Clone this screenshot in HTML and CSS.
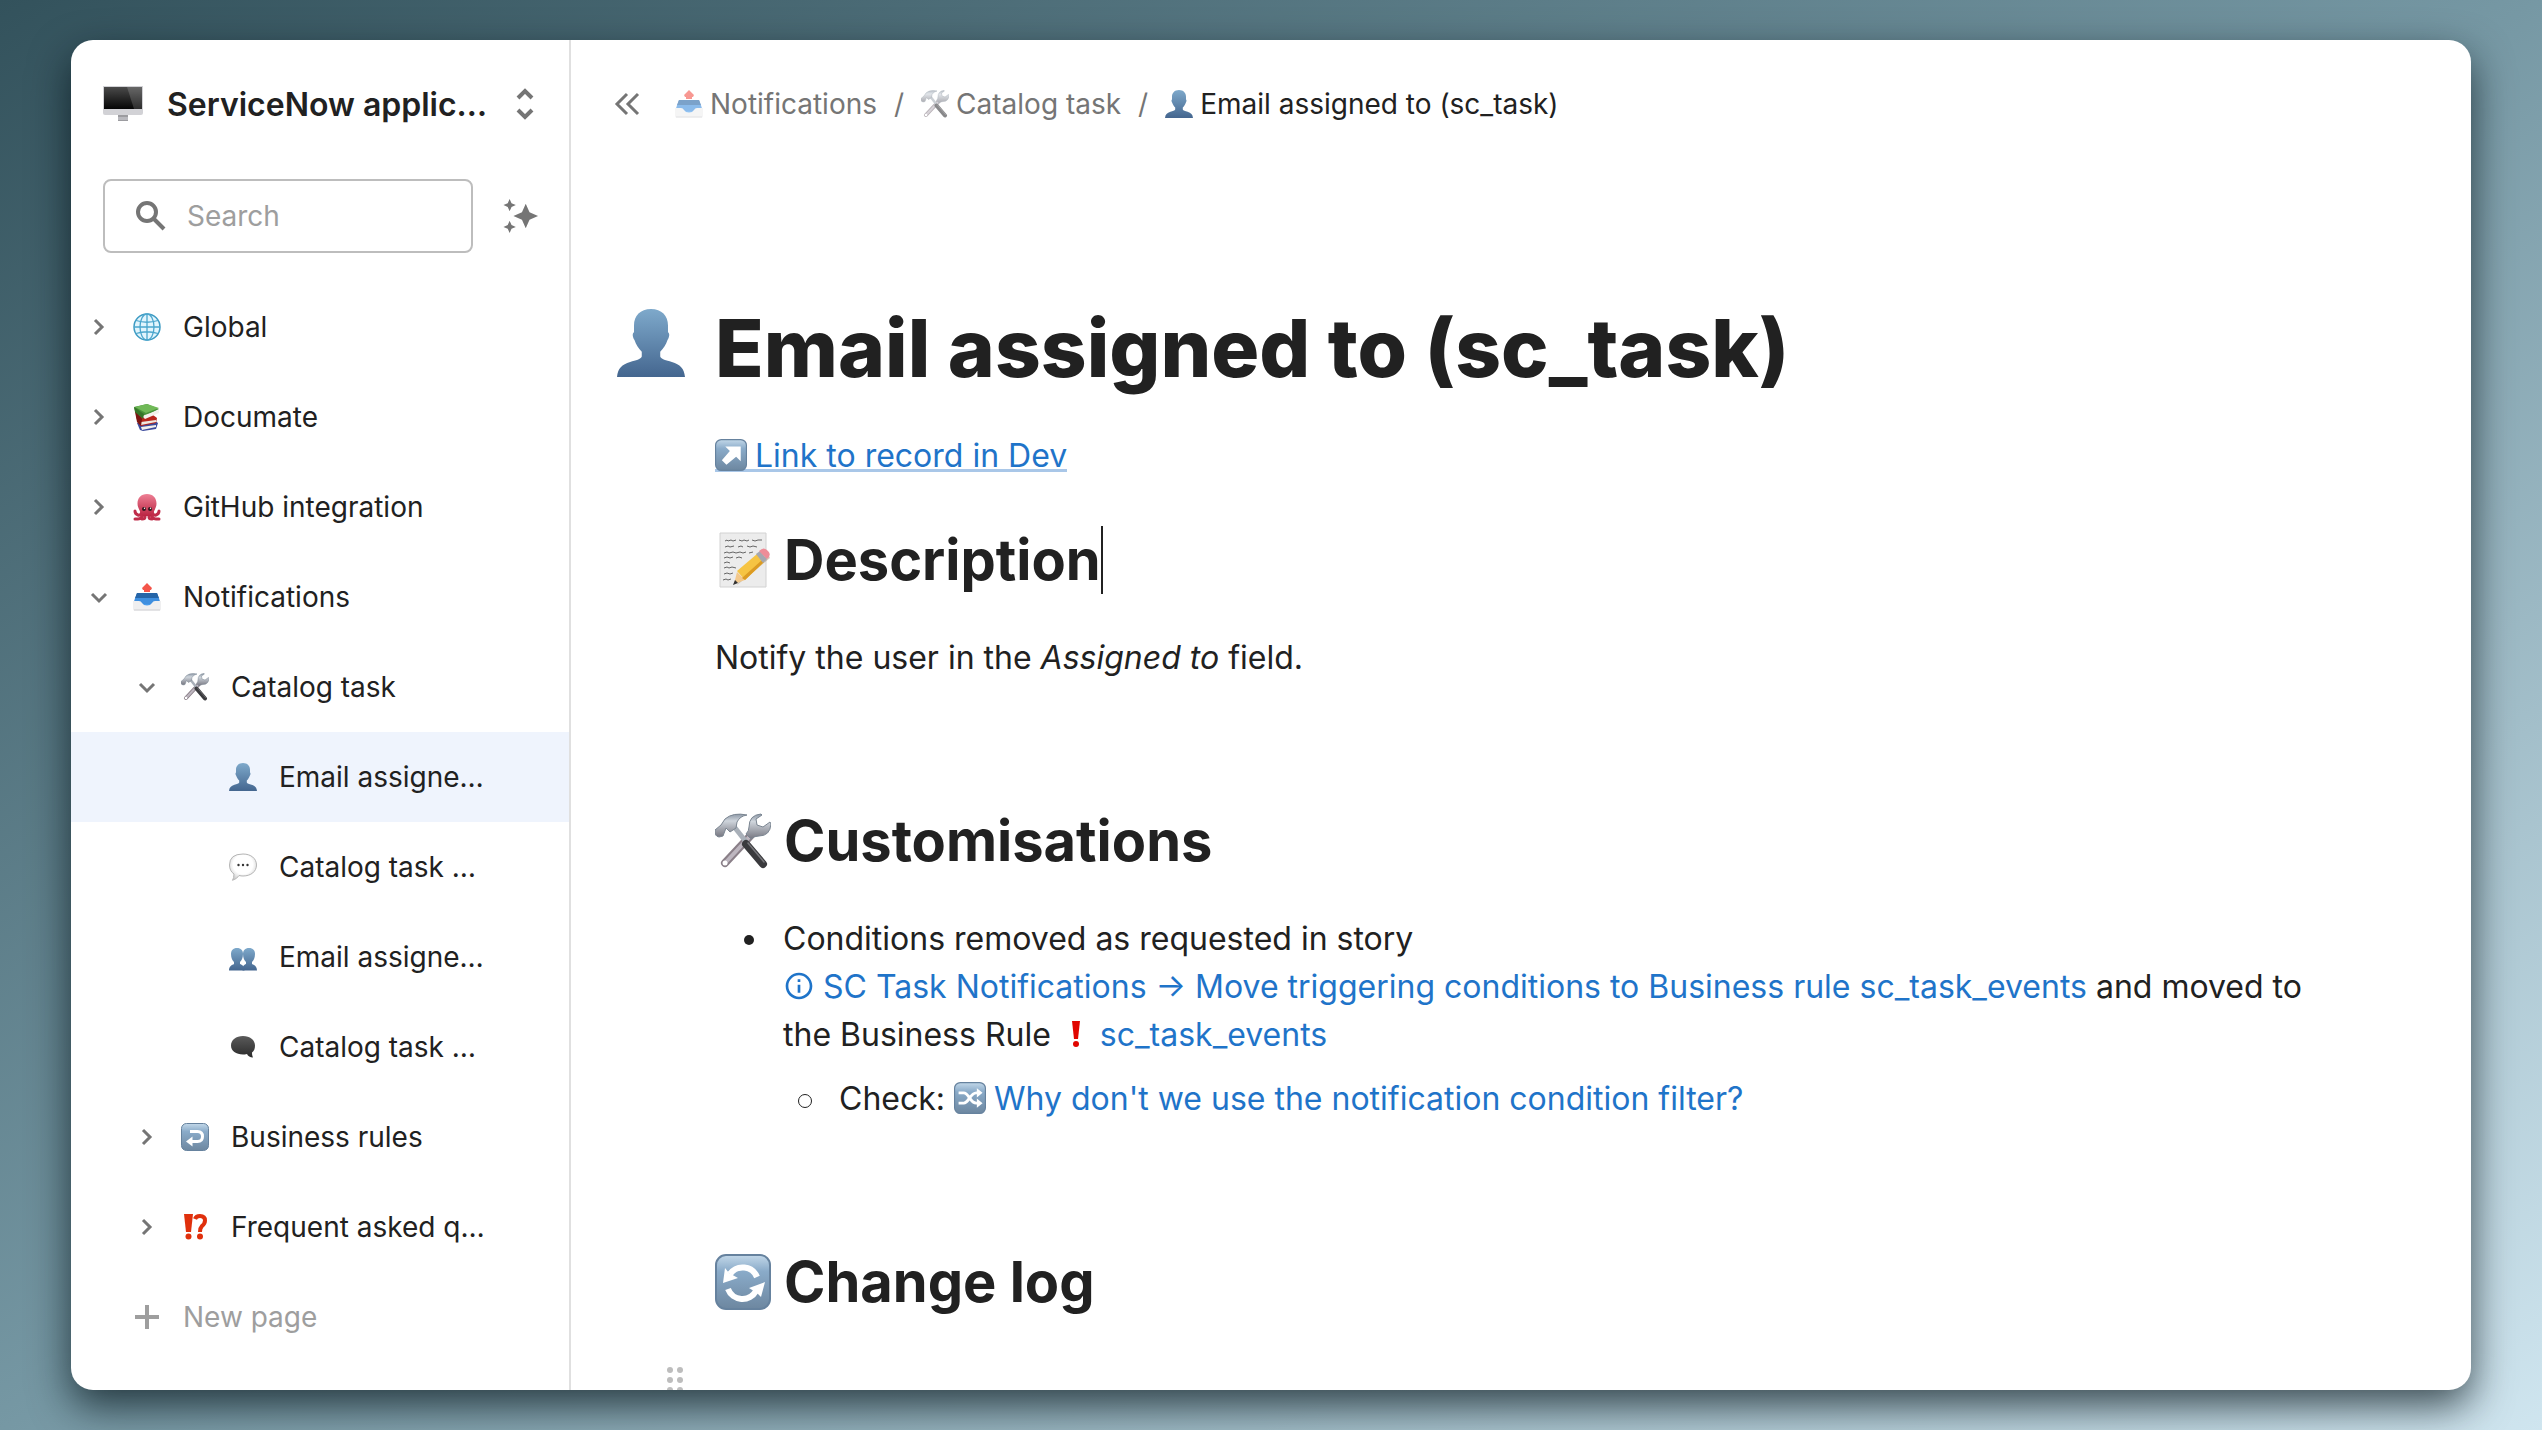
FILE: index.html
```html
<!DOCTYPE html>
<html lang="en">
  <head>
    <meta charset="UTF-8" />
    <meta name="viewport" content="width=device-width, initial-scale=1.0" />
    <title>Email assigned to (sc_task)</title>
    <link rel="stylesheet" href="styles.css" />
  </head>
  <body>
    <!-- icon sprite -->
    <svg class="sprite" aria-hidden="true">
      <defs>
        <linearGradient id="g-person" x1="0" y1="0" x2="0" y2="1">
          <stop offset="0" stop-color="#7ea9cb" />
          <stop offset="1" stop-color="#44668f" />
        </linearGradient>
        <linearGradient id="g-tile" x1="0" y1="0" x2="0" y2="1">
          <stop offset="0" stop-color="#c3d8e9" />
          <stop offset="0.3" stop-color="#8aabc9" />
          <stop offset="1" stop-color="#6d87a0" />
        </linearGradient>
        <linearGradient id="g-steel" x1="0" y1="0" x2="0" y2="1">
          <stop offset="0" stop-color="#8d98a6" />
          <stop offset="0.3" stop-color="#cfd5dc" />
          <stop offset="1" stop-color="#767680" />
        </linearGradient>
        <linearGradient id="g-screen" x1="0" y1="0" x2="0" y2="1">
          <stop offset="0" stop-color="#4a4a4a" />
          <stop offset="1" stop-color="#050505" />
        </linearGradient>
        <linearGradient id="g-tray" x1="0" y1="0" x2="0" y2="1">
          <stop offset="0" stop-color="#2a6cb4" />
          <stop offset="1" stop-color="#4ba1f3" />
        </linearGradient>
        <linearGradient id="g-dark" x1="0" y1="0" x2="0" y2="1">
          <stop offset="0" stop-color="#5a5a5a" />
          <stop offset="1" stop-color="#2b2b2b" />
        </linearGradient>
        <linearGradient id="g-octo" x1="0" y1="0" x2="0" y2="1">
          <stop offset="0" stop-color="#ee8095" />
          <stop offset="1" stop-color="#bb2442" />
        </linearGradient>
        <radialGradient id="g-bubble" cx="0.5" cy="0.4" r="0.6">
          <stop offset="0.6" stop-color="#ffffff" />
          <stop offset="1" stop-color="#cfcfcf" />
        </radialGradient>
      </defs>

      <symbol id="monitor" viewBox="0 0 40 40">
        <path fill="#b9b9be" d="M15 31h10v5H15z" />
        <path fill="#d2d2d6" d="M0 2h40v27q0 2-2 2H2q-2 0-2-2z" />
        <path fill="#9c9ca0" d="M15 31h10v2H15zM15 36h10v1H15z" />
        <path fill="url(#g-screen)" d="M1 3h38v22H1z" />
        <path fill="#fff" opacity="0.16" d="M24 3h15v22h-8z" />
      </symbol>
      <symbol id="globe" viewBox="0 0 28 28">
        <circle cx="14" cy="14" r="13" fill="#e2f5fd" stroke="#3f9cc4" stroke-width="1.5" />
        <g fill="none" stroke="#4ba6cd" stroke-width="1.3">
          <ellipse cx="14" cy="14" rx="7" ry="13" />
          <path d="M14 1v26M1 14h26M3 7.500q11 3.500 22 0M3 20.500q11-3.500 22 0" />
        </g>
      </symbol>
      <symbol id="books" viewBox="0 0 28 28">
        <path fill="#3b4a9c" d="M4 20l18-2 3 2-2 6-13 2-3-1z" />
        <path fill="#f3f1ec" d="M8 24l15-2 0 2-14 3z" />
        <path fill="#b8251c" d="M3 13l17-1 4 3-1 5-15 3-3-3z" />
        <path fill="#efe9df" d="M8 19l15-2v2L8 22z" />
        <path fill="#7c1511" d="M2 9l2-1 5 8-1 7-4-4z" />
        <path fill="#48933a" d="M1 4L14 1l12 5-12 6-4 2-8-6z" />
        <path fill="#70b957" d="M2 4L14 1l12 4-13 5z" />
        <path fill="#f3f1ec" d="M9 13l17-6v3l-14 6z" />
        <path fill="#367529" d="M1 4l10 7-1 5-8-7z" />
      </symbol>
      <symbol id="octopus" viewBox="0 0 28 28">
        <g fill="none" stroke="#c02c4a" stroke-width="3" stroke-linecap="round">
          <path d="M9 18q-1 5-4 4t-3-4M19 18q1 5 4 4t3-4" />
          <path d="M10 20q-1 6-5 6H2M18 20q1 6 5 6h3M12 20v4q0 2-3 2M16 20v4q0 2 3 2" />
        </g>
        <path fill="url(#g-octo)" d="M14 1c6 0 9.500 4 9.500 9.500 0 4-2 6-3 9L18 23h-8l-2.500-3.500c-1-3-3-5-3-9C4.500 5 8 1 14 1z" />
        <circle cx="11" cy="16" r="2" fill="#33161d" />
        <circle cx="17" cy="16" r="2" fill="#33161d" />
        <circle cx="11.500" cy="15.300" r="0.700" fill="#fff" />
        <circle cx="17.500" cy="15.300" r="0.700" fill="#fff" />
      </symbol>
      <symbol id="outbox" viewBox="0 0 28 28">
        <path fill="url(#g-tray)" d="M4 10h20l3 9v4H1v-4z" />
        <path fill="#2565a8" d="M4 10h20l2 5H2z" />
        <path fill="#3f8fdf" d="M2 15h24l1 6H1z" />
        <path fill="#f4554a" d="M14 0l5 5-1 2h-1v2h-6V7h-1L9 5z" />
        <path fill="#efeff0" d="M0 18h6q2 0 3 2 1.500 2.500 5 2.500t5-2.500q1-2 3-2h6v8q0 1.500-1.500 1.500h-25Q0 27.500 0 26z" />
        <path fill="#cfcfd2" d="M1 26.500h26v1H1z" />
      </symbol>
      <symbol id="tools" viewBox="0 0 56 56">
        <path fill="none" stroke="#8a7f88" stroke-width="8" stroke-linecap="round" d="M38 20L10 50" />
        <path fill="none" stroke="#bdb6bf" stroke-width="4" stroke-linecap="round" d="M38 20L11 49" />
        <path fill="url(#g-steel)" stroke="#7b8692" d="M46 1q-12 1-12 13 0 4-3 7l5 5q3-3 8-3 11 0 12-12l-1-2-7 5-6-2-1-6 6-4z" />
        <circle cx="10" cy="50" r="2.500" fill="#fff" />
        <path fill="none" stroke="#a9b0b9" stroke-width="5" d="M17 11l15 19" />
        <path fill="none" stroke="#3a3a3d" stroke-width="8" stroke-linecap="round" d="M31 31l17 20" />
        <path fill="none" stroke="#77777b" stroke-width="1.500" stroke-linecap="round" d="M33 30l16 19" />
        <path fill="url(#g-steel)" stroke="#7b8692" d="M0 17l6-5 4-6Q18-1 32 2q-7 1-10 7l-1 6-6 4-4-4-3 8-4 1q-5-1-4-7z" />
      </symbol>
      <symbol id="person" viewBox="0 0 70 70">
        <path fill="url(#g-person)" d="M35 0c11 0 17.500 7 17.500 17v7c2 1 1.500 5-.5 8-1.500 5-4 8-7.500 12v5c1 3 6 4 12 5.500C65 57 69 61 70 70H0c1-9 5-13 13.500-15.500 6-1.500 11-2.500 12-5.500v-5c-3.500-4-6-7-7.500-12-2-3-2.500-7-.5-8v-7C17.500 7 24 0 35 0z" />
      </symbol>
      <symbol id="people" viewBox="0 0 28 28">
        <path fill="url(#g-person)" d="M8 5c4 0 6 2.500 6 6 0 4-1.500 6.500-3 8v2c2 1 4.500 1.500 4.500 6.500H0C0 23 3 22 5 21v-2c-1.500-1.500-3-4-3-8 0-3.500 2-6 6-6z" />
        <path fill="url(#g-person)" d="M20 5c4 0 6 2.500 6 6 0 4-1.500 6.500-3 8v2c2 1 5 2 5 6.500H13.500c0-5 1.500-5.500 3.500-6.500v-2c-1.500-1.500-3-4-3-8 0-3.500 2-6 6-6z" />
      </symbol>
      <symbol id="bubble" viewBox="0 0 28 28">
        <path fill="url(#g-bubble)" stroke="#b5b5b5" d="M14 1c8 0 13.500 4.500 13.500 11S22 23 14 23q-2 0-4-.5Q8 26 3.500 27.300 5 25 5 21 .5 18 .5 12 .5 1 14 1z" />
        <circle cx="9.500" cy="12" r="1.200" fill="#333" />
        <circle cx="14" cy="12" r="1.200" fill="#333" />
        <circle cx="18.500" cy="12" r="1.200" fill="#333" />
      </symbol>
      <symbol id="bubble-dark" viewBox="0 0 28 28">
        <path fill="url(#g-dark)" d="M14 3c7 0 12 4 12 9.500 0 3.500-1 5.500-3 7 0 2.500.5 3.500 1 5-3 0-5-1.500-6-3.500-1.500.5-3 .5-4 .5-7 0-12-3.500-12-9S7 3 14 3z" />
      </symbol>
      <symbol id="tile" viewBox="0 0 56 56">
        <rect x="1" y="1" width="54" height="54" rx="10" fill="url(#g-tile)" stroke="#66829e" stroke-width="2" />
      </symbol>
      <symbol id="return" viewBox="0 0 56 56">
        <use href="#tile" />
        <path fill="none" stroke="#fff" stroke-width="6" d="M18 17h15q10 0 10 10t-10 10H21" />
        <path fill="#fff" d="M10 37l13-10v20z" />
      </symbol>
      <symbol id="north-east" viewBox="0 0 56 56">
        <use href="#tile" />
        <path fill="#fff" d="M18 13h27v26l-8-8-17 14-8-8 14-16z" />
      </symbol>
      <symbol id="shuffle" viewBox="0 0 56 56">
        <use href="#tile" />
        <path fill="none" stroke="#fff" stroke-width="5" d="M8 19h9c9 0 11 18 22 18h3M8 37h9c9 0 11-18 22-18h3" />
        <path fill="#fff" d="M40 11l10 8-10 8zM40 29l10 8-10 8z" />
      </symbol>
      <symbol id="cycle" viewBox="0 0 56 56">
        <use href="#tile" />
        <path fill="none" stroke="#fff" stroke-width="6" d="M42 23A15.500 15.500 0 0 0 15 20M13 35A15.500 15.500 0 0 0 41 37" />
        <path fill="#fff" d="M10 14l4 5 9 5-15 5zM50 28l-4 15-4-4-8-5z" />
      </symbol>
      <symbol id="interrobang" viewBox="0 0 28 28">
        <path fill="#e0300c" d="M3 1h9l-2 18H5z" />
        <circle cx="7.500" cy="23.500" r="3" fill="#e0300c" />
        <circle cx="19" cy="23.500" r="3" fill="#e0300c" />
        <path fill="none" stroke="#e0300c" stroke-width="4" d="M14 6q1-3 5-3 5 0 5 4.500 0 3-3 5.500-2 2-2 6" />
      </symbol>
      <symbol id="exclamation" viewBox="0 0 32 32">
        <path fill="#e10600" d="M12 3h8l-2 18h-4z" />
        <circle cx="16" cy="26" r="3" fill="#e10600" />
      </symbol>
      <symbol id="memo" viewBox="0 0 56 56">
        <path fill="#ececec" stroke="#d2d2d2" d="M5 1h46v54H5z" />
        <g fill="none" stroke="#666" stroke-width="1">
          <path d="M10 9l2-1 1 1 3-1 2 1 3-1m3 0l3 1 2-1 3 1 2-1m3 0l3 1 3-1 4 0" />
          <path d="M10 15l3-1 2 1 4-1m4 1l3-1 2 1m4-1l3 1 3-1 4 1" />
          <path d="M9 21l3-1 2 1 4-1 3 1 4-1 3 1 3-1m3 1l4-1" />
          <path d="M9 26l3-1 3 1 3-1m3 1l3-1 3 1" />
          <path d="M9 31l3-1 3 1" />
          <path d="M9 36l3-1 2 1 3-1 4 1M9 42l3-1 3 1 3-1M8 48l3-1 2 1 3-1" />
        </g>
        <path fill="#8a6a3c" opacity="0.35" d="M22 53l33-27-2-4-28 26z" />
        <path fill="#f3c88b" d="M19 52l3-12 8 8z" />
        <path fill="#333" d="M18 53l2-5 3 3z" />
        <path fill="#f6c443" d="M22 39l20-17 7 8-19 18z" />
        <path fill="#dc9b23" d="M27 46l20-18 2 2-19 18z" />
        <path fill="#a5a8b0" d="M41 22l4-3 7 8-4 4z" />
        <path fill="#ee8d98" d="M44 19q5-5 9 0 4 4-1 8z" />
      </symbol>
      <symbol id="info" viewBox="0 0 24 24">
        <path fill="currentColor" d="M11 7h2v2h-2zm0 4h2v6h-2zm1-9C6.480 2 2 6.480 2 12s4.480 10 10 10 10-4.480 10-10S17.520 2 12 2zm0 18c-4.410 0-8-3.590-8-8s3.590-8 8-8 8 3.590 8 8-3.590 8-8 8z" />
      </symbol>
      <symbol id="chevron" viewBox="0 0 28 28">
        <path fill="none" stroke="#757575" stroke-width="3" d="M10 7l7 7-7 7" />
      </symbol>
      <symbol id="chevron-down" viewBox="0 0 28 28">
        <path fill="none" stroke="#757575" stroke-width="3" d="M7 11l7 7 7-7" />
      </symbol>
      <symbol id="plus" viewBox="0 0 28 28">
        <path fill="none" stroke="#9e9e9e" stroke-width="4" d="M14 2v24M2 14h24" />
      </symbol>
    </svg>

    <div class="window">
      <aside class="sidebar">
        <button class="workspace" type="button">
          <svg class="workspace-icon"><use href="#monitor" /></svg>
          <span class="workspace-name">ServiceNow applic…</span>
          <svg class="workspace-toggle" viewBox="0 0 20 32">
            <path fill="none" stroke="#757575" stroke-width="4" d="M3 10l7-7 7 7M3 22l7 7 7-7" />
          </svg>
        </button>

        <div class="search-row">
          <label class="search">
            <svg class="search-icon" viewBox="0 0 32 32">
              <circle cx="12" cy="12" r="9" fill="none" stroke="#757575" stroke-width="4" />
              <path fill="none" stroke="#757575" stroke-width="4" d="M18 18l11 11" />
            </svg>
            <input type="text" placeholder="Search" aria-label="Search" />
          </label>
          <button class="ai-button" type="button" aria-label="Ask AI">
            <svg viewBox="0 0 38 38">
              <path fill="#757575" d="M24 6l4 9 9 4-9 4-4 9-4-9-9-4 9-4zM7 1l2 4.500L13.500 7.500 9 9.500 7 14 5 9.500.5 7.500 5 5.500zM7 24l2 4.500 4.500 2-4.500 2L7 37l-2-4.500-4.500-2 4.500-2z" />
            </svg>
          </button>
        </div>

        <nav class="tree">
          <a class="node" href="#"><svg class="arrow"><use href="#chevron" /></svg><svg class="emoji"><use href="#globe" /></svg><span>Global</span></a>
          <a class="node" href="#"><svg class="arrow"><use href="#chevron" /></svg><svg class="emoji"><use href="#books" /></svg><span>Documate</span></a>
          <a class="node" href="#"><svg class="arrow"><use href="#chevron" /></svg><svg class="emoji"><use href="#octopus" /></svg><span>GitHub integration</span></a>
          <a class="node" href="#"><svg class="arrow"><use href="#chevron-down" /></svg><svg class="emoji"><use href="#outbox" /></svg><span>Notifications</span></a>
          <a class="node level-1" href="#"><svg class="arrow"><use href="#chevron-down" /></svg><svg class="emoji"><use href="#tools" /></svg><span>Catalog task</span></a>
          <a class="node level-2 active" href="#"><svg class="arrow"></svg><svg class="emoji"><use href="#person" /></svg><span>Email assigne…</span></a>
          <a class="node level-2" href="#"><svg class="arrow"></svg><svg class="emoji"><use href="#bubble" /></svg><span>Catalog task …</span></a>
          <a class="node level-2" href="#"><svg class="arrow"></svg><svg class="emoji"><use href="#people" /></svg><span>Email assigne…</span></a>
          <a class="node level-2" href="#"><svg class="arrow"></svg><svg class="emoji"><use href="#bubble-dark" /></svg><span>Catalog task …</span></a>
          <a class="node level-1" href="#"><svg class="arrow"><use href="#chevron" /></svg><svg class="emoji"><use href="#return" /></svg><span>Business rules</span></a>
          <a class="node level-1" href="#"><svg class="arrow"><use href="#chevron" /></svg><svg class="emoji"><use href="#interrobang" /></svg><span>Frequent asked q…</span></a>
          <button class="node new-page" type="button"><svg class="arrow"></svg><svg class="emoji"><use href="#plus" /></svg><span>New page</span></button>
        </nav>
      </aside>

      <main class="page">
        <header class="topbar">
          <button class="collapse" type="button" aria-label="Collapse sidebar">
            <svg viewBox="0 0 28 28">
              <path fill="none" stroke="#757575" stroke-width="3" d="M14 4L4 14l10 10M25 4L15 14l10 10" />
            </svg>
          </button>
          <nav class="breadcrumb">
            <a class="crumb" href="#"><svg class="emoji"><use href="#outbox" /></svg>Notifications</a>
            <span class="slash">/</span>
            <a class="crumb" href="#"><svg class="emoji"><use href="#tools" /></svg>Catalog task</a>
            <span class="slash">/</span>
            <a class="crumb current" href="#"><svg class="emoji"><use href="#person" /></svg>Email assigned to (sc_task)</a>
          </nav>
        </header>

        <article class="doc">
          <div class="doc-title">
            <svg class="title-icon"><use href="#person" /></svg>
            <h1>Email assigned to (sc_task)</h1>
          </div>
          <p><a class="record-link" href="#"><svg class="inline-icon"><use href="#north-east" /></svg>Link to record in Dev</a></p>

          <section class="first">
            <h2><svg class="h2-icon"><use href="#memo" /></svg>Description<i class="caret"></i></h2>
            <p>Notify the user in the <em>Assigned to</em> field.</p>
          </section>

          <section>
            <h2><svg class="h2-icon"><use href="#tools" /></svg>Customisations</h2>
            <ul>
              <li>
                <div>
                  Conditions removed as requested in story
                  <a class="page-link" href="#"><svg class="inline-icon"><use href="#info" /></svg>SC Task Notifications → Move triggering conditions to Business rule sc_task_events</a>
                  and moved to the Business Rule
                  <a class="page-link" href="#"><svg class="inline-icon"><use href="#exclamation" /></svg>sc_task_events</a>
                  <ul>
                    <li>
                      <div>Check: <a class="page-link" href="#"><svg class="inline-icon"><use href="#shuffle" /></svg>Why don't we use the notification condition filter?</a></div>
                    </li>
                  </ul>
                </div>
              </li>
            </ul>
          </section>

          <section>
            <h2><svg class="h2-icon"><use href="#cycle" /></svg>Change log</h2>
          </section>

          <svg class="drag-handle" viewBox="0 0 16 26">
            <g fill="#bdbdbd">
              <circle cx="3" cy="3" r="3" />
              <circle cx="13" cy="3" r="3" />
              <circle cx="3" cy="13" r="3" />
              <circle cx="13" cy="13" r="3" />
              <circle cx="3" cy="23" r="3" />
              <circle cx="13" cy="23" r="3" />
            </g>
          </svg>
        </article>
      </main>
    </div>
  </body>
</html>
```
FILE: styles.css
```css
* {
  box-sizing: border-box;
}
body {
  margin: 0;
  padding: 40px 71px;
  height: 100vh;
  font-family: Inter, "Liberation Sans", sans-serif;
  font-size: 28px;
  color: #212121;
  background: linear-gradient(
    to bottom right,
    #33525c 0%,
    #7698a4 50%,
    #cfe5ef 100%
  );
  overflow: hidden;
}
a {
  color: inherit;
  text-decoration: none;
}
button {
  padding: 0;
  border: 0;
  background: none;
  color: inherit;
  font: inherit;
  text-align: left;
  cursor: pointer;
}
svg {
  flex: none;
}
.sprite {
  position: absolute;
  width: 0;
  height: 0;
}
.window {
  display: flex;
  height: 100%;
  background: #fff;
  border-radius: 22px;
  box-shadow: 0 16px 40px rgba(0, 14, 20, 0.7);
  overflow: hidden;
}

/* sidebar */
.sidebar {
  flex: none;
  width: 500px;
  padding-top: 24px;
  border-right: 2px solid #e0e0e0;
}
.workspace {
  display: flex;
  align-items: center;
  width: 100%;
  height: 80px;
  padding: 0 34px 0 32px;
  font-size: 32px;
  font-weight: 600;
}
.workspace-icon {
  width: 40px;
  height: 40px;
  margin-right: 24px;
}
.workspace-name {
  flex: 1;
  white-space: nowrap;
}
.workspace-toggle {
  width: 20px;
  height: 32px;
}
.search-row {
  display: flex;
  align-items: center;
  justify-content: space-between;
  padding: 0 30px 0 32px;
  margin: 35px 0 29px;
}
.search {
  display: flex;
  align-items: center;
  gap: 20px;
  width: 370px;
  height: 74px;
  padding: 0 30px;
  border: 2px solid #bdbdbd;
  border-radius: 8px;
}
.search-icon {
  width: 32px;
  height: 32px;
}
.search input {
  flex: 1;
  min-width: 0;
  padding: 0;
  border: 0;
  outline: 0;
  font: inherit;
}
.search input::placeholder {
  color: #9e9e9e;
}
.ai-button svg {
  display: block;
  width: 36px;
  height: 36px;
}
.node {
  display: flex;
  align-items: center;
  width: 100%;
  height: 90px;
  padding-left: 14px;
  white-space: nowrap;
}
.level-1 {
  padding-left: 62px;
}
.level-2 {
  padding-left: 110px;
}
.active {
  background: #eff4fd;
}
.new-page {
  color: #9e9e9e;
}
.arrow {
  width: 28px;
  height: 28px;
  margin-right: 20px;
}
.emoji {
  width: 28px;
  height: 28px;
}
.node .emoji {
  margin-right: 22px;
}

/* page */
.page {
  flex: 1;
  min-width: 0;
}
.topbar {
  display: flex;
  align-items: center;
  gap: 34px;
  height: 128px;
  padding: 0 42px;
}
.collapse svg {
  display: block;
  width: 28px;
  height: 28px;
}
.breadcrumb,
.crumb {
  display: flex;
  align-items: center;
}
.breadcrumb {
  gap: 17px;
  color: #757575;
}
.crumb {
  gap: 7px;
}
.crumb .emoji {
  opacity: 0.6;
}
.current {
  color: #212121;
}
.current .emoji {
  opacity: 1;
}
.doc {
  padding: 132px 144px 0;
  font-size: 32px;
  line-height: 48px;
}
.doc-title {
  display: flex;
  gap: 30px;
  margin: 0 0 36px -98px;
}
.title-icon {
  width: 68px;
  height: 68px;
  margin-top: 9px;
}
h1 {
  margin: 0;
  font-size: 80px;
  font-weight: 800;
  line-height: 96px;
}
h2 {
  display: flex;
  align-items: center;
  margin: 0 0 38px;
  font-size: 56px;
  font-weight: 700;
  line-height: 72px;
}
.h2-icon {
  width: 56px;
  height: 56px;
  margin-right: 13px;
}
.caret {
  width: 2px;
  height: 68px;
  background: #212121;
}
p {
  margin: 0;
}
section {
  margin-top: 123px;
}
.first {
  margin-top: 44px;
}
.inline-icon {
  width: 32px;
  height: 32px;
  margin-right: 8px;
  vertical-align: -4px;
}
.record-link {
  color: #1f74c9;
  background: linear-gradient(#a9c7e8, #a9c7e8) 0 calc(100% - 3px) / 100% 3px
    no-repeat;
}
.page-link {
  color: #1f74c9;
  white-space: nowrap;
}
ul {
  margin: 0;
  padding: 0;
  list-style: none;
}
li {
  display: grid;
  grid-template-columns: 68px 1fr;
}
li::before {
  content: "";
  width: 10px;
  height: 10px;
  margin: 20px 0 0 29px;
  border-radius: 50%;
  background: #212121;
}
li li {
  grid-template-columns: 56px 1fr;
  margin-top: 16px;
}
li li::before {
  width: 12px;
  height: 12px;
  margin: 19px 0 0 15px;
  border: 1px solid #212121;
  background: none;
}
.drag-handle {
  display: block;
  width: 16px;
  height: 26px;
  margin: 49px 0 0 -48px;
}
```
